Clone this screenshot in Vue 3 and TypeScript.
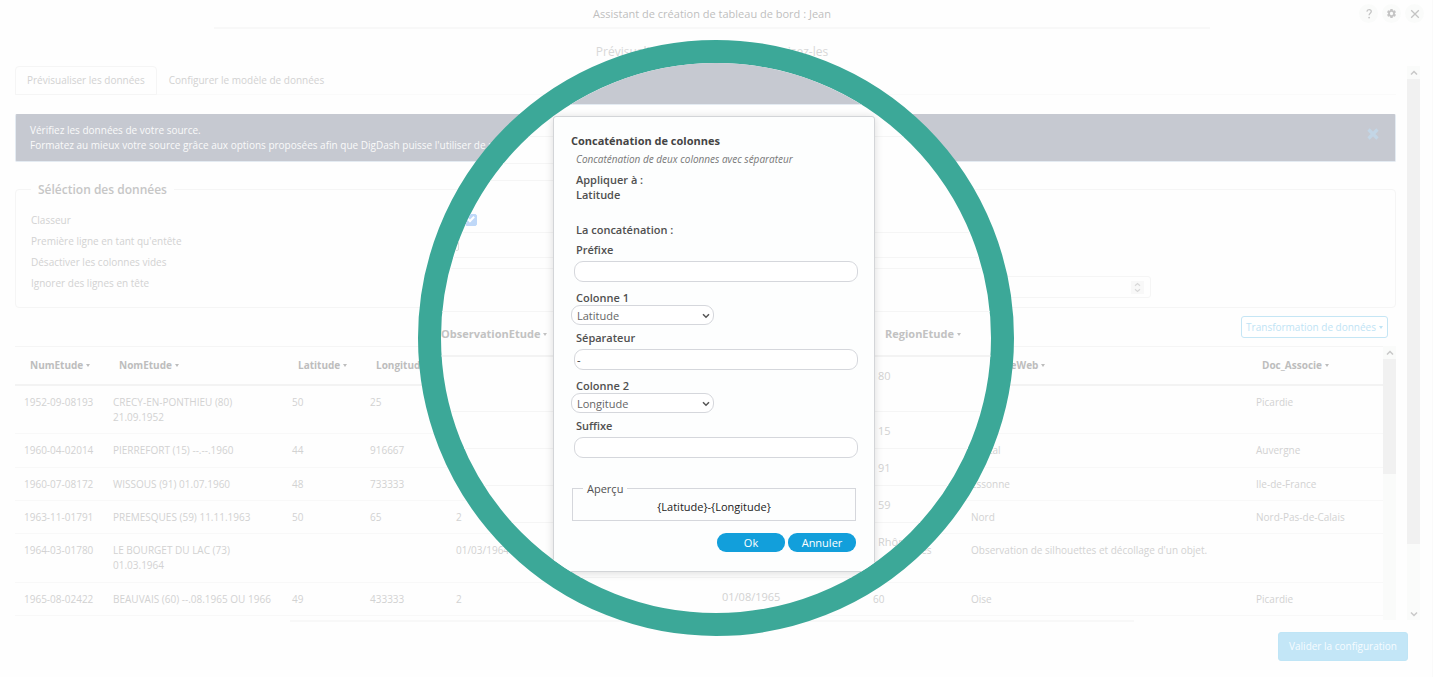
<script setup lang="ts">
import { ref } from 'vue'

interface Study {
  num: string
  name: string
  lat: string
  lon: string
  obs: string
  region: string
  site: string
  doc: string
}

interface LensRow {
  date: string
  region: string
  tall: boolean
}

const columns: string[] = ['NumEtude', 'NomEtude', 'Latitude', 'Longitude', '', '', 'AdresseWeb', 'Doc_Associe']

const studies: Study[] = [
  { num: '1952-09-08193', name: 'CRECY-EN-PONTHIEU (80) 21.09.1952', lat: '50', lon: '25', obs: '', region: '', site: '', doc: 'Picardie' },
  { num: '1960-04-02014', name: 'PIERREFORT (15) --.--.1960', lat: '44', lon: '916667', obs: '', region: '', site: 'Cantal', doc: 'Auvergne' },
  { num: '1960-07-08172', name: 'WISSOUS (91) 01.07.1960', lat: '48', lon: '733333', obs: '', region: '', site: 'Essonne', doc: 'Ile-de-France' },
  { num: '1963-11-01791', name: 'PREMESQUES (59) 11.11.1963', lat: '50', lon: '65', obs: '2', region: '', site: 'Nord', doc: 'Nord-Pas-de-Calais' },
  { num: '1964-03-01780', name: 'LE BOURGET DU LAC (73) 01.03.1964', lat: '', lon: '', obs: '01/03/1964', region: 'Rhône-Alpes', site: "Observation de silhouettes et décollage d'un objet.", doc: '' },
  { num: '1965-08-02422', name: 'BEAUVAIS (60) --.08.1965 OU 1966', lat: '49', lon: '433333', obs: '2', region: '60', site: 'Oise', doc: 'Picardie' },
]

const lensRows: LensRow[] = [
  { date: '', region: '80', tall: true },
  { date: '', region: '15', tall: false },
  { date: '', region: '91', tall: false },
  { date: '', region: '59', tall: false },
  { date: '', region: 'Rhône', tall: true },
  { date: '01/08/1965', region: '', tall: false },
]

const headerRow = ref(true)
const skipEmpty = ref(false)
const prefix = ref('')
const separator = ref('-')
const suffix = ref('')
const column1 = ref('Latitude')
const column2 = ref('Longitude')
</script>

<template>
  <div class="page">
    <header class="top">
      <h1>Assistant de création de tableau de bord : Jean</h1>
      <div class="tools">
        <button type="button">
          <svg viewBox="0 0 12 12" width="12" height="12"><path d="M3.9 3.6C4 2.3 5 1.7 6.1 1.7c1.200 0 2.200.7 2.200 1.900 0 1.700-2.200 1.800-2.200 3.700" fill="none" stroke="currentColor" stroke-width="1.300" /><circle cx="6.100" cy="9.600" r=".9" fill="currentColor" /></svg>
        </button>
        <button type="button">
          <svg viewBox="0 0 24 24" width="11" height="11"><path fill="currentColor" fill-rule="evenodd" d="M19.400 13a7.500 7.500 0 0 0 0-2l2.400-1.800-2.400-4.200-2.800 1.100a8 8 0 0 0-1.800-1L14.400 2H9.600l-.5 3.100a8 8 0 0 0-1.700 1L4.600 5 2.200 9.200 4.600 11a7.500 7.500 0 0 0 0 2l-2.400 1.800L4.600 19l2.800-1.100c.5.400 1.100.7 1.700 1l.5 3.100h4.800l.4-3.100c.7-.3 1.300-.6 1.800-1l2.800 1.100 2.400-4.200zM12 15.600a3.600 3.600 0 1 1 0-7.200 3.600 3.600 0 0 1 0 7.200z" /></svg>
        </button>
        <button type="button">
          <svg viewBox="0 0 12 12" width="12" height="12"><path d="M2.200 2.200l7.600 7.600M9.800 2.200L2.200 9.800" stroke="currentColor" stroke-width="1.300" /></svg>
        </button>
      </div>
    </header>
    <p class="intro">Prévisualisez les données et organisez-les</p>

    <main class="body">
      <div class="content">
        <nav class="tabs">
          <button type="button" class="tab active">Prévisualiser les données</button>
          <button type="button" class="tab">Configurer le modèle de données</button>
        </nav>

        <div class="banner">
          <p>
            Vérifiez les données de votre source.<br />
            Formatez au mieux votre source grâce aux options proposées afin que DigDash puisse l'utiliser de manière optimale.
          </p>
          <button type="button" class="banner-close">
            <svg viewBox="0 0 12 12" width="12" height="12"><path d="M1.500 1.500l9 9M10.500 1.500l-9 9" stroke="currentColor" stroke-width="3.200" /></svg>
          </button>
        </div>

        <fieldset class="selection">
          <legend>Séléction des données</legend>
          <span>Classeur</span>
          <label for="header-row">Première ligne en tant qu'entête</label>
          <label for="skip-empty">Désactiver les colonnes vides</label>
          <div class="skip-row">
            <label for="skip-lines">Ignorer des lignes en tête</label>
            <div class="number">
              <input id="skip-lines" type="text" inputmode="numeric" />
              <span class="spinner">
                <svg viewBox="0 0 13 13" width="13" height="13"><path d="M4 4.800l2.500-2.300L9 4.800M4 8.200l2.500 2.300L9 8.200" fill="none" stroke="currentColor" stroke-width="1.200" /></svg>
              </span>
            </div>
          </div>
        </fieldset>

        <div class="toolbar">
          <button type="button" class="transform">Transformation de données<i class="caret"></i></button>
        </div>

        <div class="grid">
          <table class="data">
            <colgroup>
              <col class="c-num" /><col class="c-name" /><col class="c-lat" /><col class="c-lon" />
              <col /><col class="c-region" /><col class="c-site" /><col class="c-doc" />
            </colgroup>
            <thead>
              <tr>
                <th v-for="(c, i) in columns" :key="i">{{ c }}<i v-if="c" class="caret"></i></th>
              </tr>
            </thead>
            <tbody>
              <tr v-for="s in studies" :key="s.num">
                <td>{{ s.num }}</td>
                <td class="wrap">{{ s.name }}</td>
                <td>{{ s.lat }}</td>
                <td>{{ s.lon }}</td>
                <td>{{ s.obs }}</td>
                <td>{{ s.region }}</td>
                <td>{{ s.site }}</td>
                <td>{{ s.doc }}</td>
              </tr>
            </tbody>
          </table>
          <div class="scroll">
            <span class="arrow"><svg viewBox="0 0 8 6" width="8" height="6"><path d="M1 4.500l3-3 3 3" fill="none" stroke="currentColor" stroke-width="1.500" /></svg></span>
            <span class="thumb short"></span>
          </div>
        </div>
      </div>

      <div class="scroll">
        <span class="arrow"><svg viewBox="0 0 8 6" width="8" height="6"><path d="M1 4.500l3-3 3 3" fill="none" stroke="currentColor" stroke-width="1.500" /></svg></span>
        <span class="thumb long"></span>
        <span class="arrow last"><svg viewBox="0 0 8 6" width="8" height="6"><path d="M1 1.500l3 3 3-3" fill="none" stroke="currentColor" stroke-width="1.500" /></svg></span>
      </div>
    </main>

    <footer class="bottom">
      <button type="button" class="validate">Valider la configuration</button>
    </footer>

    <div class="lens">
      <div class="lens-banner"></div>
      <div class="strip s1"></div>
      <div class="strip s2 half"></div>
      <div class="strip s3 half"></div>
      <div class="strip s4"><input id="header-row" v-model="headerRow" type="checkbox" /></div>
      <div class="strip s5"><input id="skip-empty" v-model="skipEmpty" type="checkbox" /></div>
      <div class="strip s6"></div>
      <table class="lens-table">
        <colgroup><col class="l-obs" /><col class="l-date" /><col /></colgroup>
        <thead>
          <tr>
            <th>ObservationEtude<i class="caret"></i></th>
            <th></th>
            <th>RegionEtude<i class="caret"></i></th>
          </tr>
        </thead>
        <tbody>
          <tr v-for="(r, i) in lensRows" :key="i" :class="{ tall: r.tall }">
            <td></td>
            <td>{{ r.date }}</td>
            <td>{{ r.region }}</td>
          </tr>
        </tbody>
      </table>

      <form class="dialog" @submit.prevent>
        <h2>Concaténation de colonnes</h2>
        <p class="hint">Concaténation de deux colonnes avec séparateur</p>
        <p class="strong">Appliquer à :<br />Latitude</p>
        <p class="strong section">La concaténation :</p>

        <label class="strong" for="prefix">Préfixe</label>
        <input id="prefix" v-model="prefix" type="text" />

        <label class="strong for-select" for="column1">Colonne 1</label>
        <div class="select">
          <select id="column1" v-model="column1">
            <option>Latitude</option>
            <option>Longitude</option>
          </select>
          <svg viewBox="0 0 8 6" width="8" height="6"><path d="M1 1.200l3 3 3-3" fill="none" stroke="currentColor" stroke-width="1.500" /></svg>
        </div>

        <label class="strong" for="separator">Séparateur</label>
        <input id="separator" v-model="separator" type="text" />

        <label class="strong for-select" for="column2">Colonne 2</label>
        <div class="select">
          <select id="column2" v-model="column2">
            <option>Latitude</option>
            <option>Longitude</option>
          </select>
          <svg viewBox="0 0 8 6" width="8" height="6"><path d="M1 1.200l3 3 3-3" fill="none" stroke="currentColor" stroke-width="1.500" /></svg>
        </div>

        <label class="strong" for="suffix">Suffixe</label>
        <input id="suffix" v-model="suffix" type="text" />

        <fieldset class="preview">
          <legend>Aperçu</legend>
          <output>{{ prefix }}{{ '{' + column1 + '}' }}{{ separator }}{{ '{' + column2 + '}' }}{{ suffix }}</output>
        </fieldset>

        <div class="actions">
          <button type="submit">Ok</button>
          <button type="button">Annuler</button>
        </div>
      </form>
    </div>
  </div>
</template>

<style>
body {
  margin: 0;
  background: #fefefe;
}
</style>

<style scoped>
.page {
  position: relative;
  box-sizing: border-box;
  min-height: 100vh;
  overflow: hidden;
  padding-right: 8px;
  border-right: 1px solid #fafafa;
  font-family: "Open Sans", "Noto Sans", sans-serif;
  font-size: 10px;
  line-height: 15px;
  color: #d2d2d2;
  background: #fefefe;
}
.page *,
.page *::before,
.page *::after {
  box-sizing: border-box;
}
h1, h2, p {
  margin: 0;
}
button, input, select {
  margin: 0;
  padding: 0;
  font: inherit;
  color: inherit;
}
svg {
  display: block;
}

.top {
  display: grid;
  grid-template-columns: 1fr auto 1fr;
  grid-template-rows: 1fr 2px;
  align-items: center;
  height: 29px;
}
.top::after {
  content: "";
  grid-column: 1 / -1;
  justify-self: center;
  width: 70%;
  height: 2px;
  background: #f8f8f8;
}
.top h1 {
  grid-column: 2;
  font-size: 11px;
  font-weight: 500;
  color: #bebebe;
}
.tools {
  display: flex;
  justify-content: flex-end;
  gap: 4px;
}
.tools button {
  display: grid;
  place-items: center;
  width: 19px;
  height: 19px;
  border: 0;
  border-radius: 50%;
  background: #fafbfa;
  color: #c4c4c4;
}
.intro {
  padding-top: 15px;
  height: 37px;
  font-size: 12px;
  line-height: 16px;
  text-align: center;
  color: #d8d8d8;
}

.body {
  display: flex;
  gap: 11px;
  padding: 0 4px 0 15px;
}
.content {
  flex: 1;
  min-width: 0;
}
.tabs {
  display: flex;
  height: 29px;
  border-bottom: 1px solid #fafafa;
}
.tab {
  height: 29px;
  padding: 0 11px;
  border: 1px solid transparent;
  background: none;
}
.tab.active {
  border-color: #f5f5f5;
  border-radius: 4px 4px 0 0;
}
.banner {
  display: flex;
  justify-content: space-between;
  align-items: flex-start;
  margin-top: 19px;
  padding: 8px 16px 8px 14px;
  border: 1px solid #e4ebf2;
  border-top-color: #c6c9d1;
  border-radius: 2px;
  background: #c6c9d1;
  color: #fafafa;
}
.banner-close {
  margin-top: 5px;
  border: 0;
  background: none;
  color: #c3d6e6;
}

.selection {
  display: flex;
  flex-direction: column;
  margin: 20px 0 0;
  padding: 16px 15px 9px;
  border: 1px solid #f5f5f5;
  border-radius: 4px;
}
.selection legend {
  padding: 0 7px;
  font-size: 12px;
  font-weight: 600;
  color: #c6c6c6;
}
.selection > span,
.selection > label {
  margin-bottom: 6px;
}
.skip-row {
  display: grid;
  grid-template-columns: 425fr 695fr 229fr;
  align-items: start;
}
.number {
  display: flex;
  align-items: center;
  height: 22px;
  padding-right: 6px;
  border: 1px solid #f5f5f5;
  border-radius: 3px;
}
.number input {
  flex: 1;
  min-width: 0;
  border: 0;
  background: none;
}
.spinner {
  background: #f8f8f8;
  color: #d8d8d8;
}

.toolbar {
  display: flex;
  justify-content: flex-end;
  padding: 8px 8px 8px 0;
}
.transform {
  height: 22px;
  padding: 0 4px;
  border: 1px solid #c5e6f5;
  border-radius: 3px;
  background: #fff;
  color: #bfe4f5;
}
.caret {
  display: inline-block;
  margin-left: 3px;
  border: solid transparent;
  border-width: 3px 2px 0;
  border-top-color: currentColor;
  vertical-align: 2px;
}

.grid {
  display: flex;
  align-items: stretch;
}
.data,
.lens-table {
  flex: 1;
  table-layout: fixed;
  border-collapse: separate;
  border-spacing: 0;
  text-align: left;
}
.data {
  width: 100%;
  margin-bottom: 4px;
  height: 270px;
  border-top: 1px solid #f5f5f5;
}
.data th {
  height: 39px;
  padding: 0 0 0 15px;
  border-bottom: 2px solid #f3f3f3;
  font-weight: 700;
  white-space: nowrap;
  color: #bdbdbd;
}
.data td {
  padding: 9px 0 8px 9px;
  border-bottom: 1px solid #f8f8f8;
  vertical-align: top;
  white-space: nowrap;
}
.data td.wrap {
  padding-right: 10px;
  white-space: normal;
}
.c-num { width: 89px; }
.c-name { width: 179px; }
.c-lat { width: 78px; }
.c-lon { width: 86px; }
.c-region { width: 98px; }
.c-site { width: 285px; }
.c-doc { width: 136px; }

.scroll {
  display: flex;
  flex-direction: column;
  flex: none;
  width: 13px;
  background: #fafbfa;
  color: #c8c8c8;
}
.arrow {
  display: grid;
  place-items: center;
  height: 13px;
}
.arrow.last {
  margin-top: auto;
}
.thumb {
  background: #f1f1f1;
}
.thumb.short {
  height: 42%;
}
.thumb.long {
  height: 84%;
}

.bottom {
  display: flex;
  flex-direction: column;
  align-items: flex-end;
  padding: 0 16px 16px 0;
}
.bottom::before {
  content: "";
  align-self: center;
  width: 60%;
  height: 2px;
  margin: 0 -16px 10px 0;
  background: #f8f8f8;
}
.validate {
  height: 29px;
  padding: 0 10px;
  border: 1px solid #bfe5f6;
  border-radius: 3px;
  background: #c3e6f7;
  color: #f6fcff;
}

/* Round magnifier over the page, clipped to its ring */
.lens {
  position: absolute;
  top: 40px;
  left: calc(50% - 298px);
  width: 596px;
  height: 596px;
  overflow: hidden;
  border: 23px solid #3ca898;
  border-radius: 50%;
  background: #fefefe;
  font-size: 11px;
}
.lens-banner {
  height: 42px;
  border-bottom: 1px solid #e4ebf2;
  background: #c6c9d1;
}
.strip {
  display: flex;
  align-items: flex-end;
  border-bottom: 1px solid #f5f5f5;
}
.s1 { height: 32px; }
.s2 { height: 27px; }
.s3 { height: 17px; }
.s4 { height: 52px; padding: 0 0 6px 24px; }
.s5 { height: 25px; padding: 0 0 6px 6px; }
.s6 { height: 11px; }
.half {
  width: 50%;
}
.strip input {
  appearance: none;
  width: 12px;
  height: 12px;
  border: 1px solid #dedede;
  border-radius: 2px;
}
.strip input:checked {
  border-color: #bfd8f8;
  background: #bfd8f8;
}
.strip input:checked::before {
  content: "";
  display: block;
  width: 4px;
  height: 7px;
  margin-left: 3px;
  border: solid #fff;
  border-width: 0 2px 2px 0;
  transform: rotate(45deg);
}
.lens-table {
  width: 600px;
  margin: 42px 0 0 -14px;
  border-top: 1px solid #f5f5f5;
  line-height: 17px;
}
.lens-table th {
  height: 45px;
  padding: 0 0 0 14px;
  border-bottom: 2px solid #f3f3f3;
  font-weight: 700;
  color: #c2c2c2;
}
.lens-table td {
  height: 37px;
  padding: 10px 0 0 7px;
  border-bottom: 1px solid #f5f5f5;
  vertical-align: top;
}
.lens-table .tall td {
  height: 55px;
}
.l-obs { width: 288px; }
.l-date { width: 156px; }

.dialog {
  position: absolute;
  top: 53px;
  left: 112px;
  width: 322px;
  padding: 16px 16px 19px 17px;
  border: 1px solid #d3d5d8;
  border-radius: 3px;
  background: #fdfefe;
  box-shadow: 0 1px 8px rgba(0, 0, 0, 0.14);
  color: #505050;
}
.dialog h2 {
  font-size: 11px;
  font-weight: 700;
  color: #444;
}
.hint {
  margin: 4px 0 0 5px;
  font-size: 10px;
  font-style: italic;
  color: #777;
}
.strong {
  display: block;
  margin: 5px 0 0 5px;
  font-weight: 600;
}
.section {
  margin-top: 20px;
}
.for-select {
  margin-top: 8px;
}
.dialog input {
  display: block;
  width: calc(100% - 3px);
  height: 21px;
  margin: 4px 0 0 3px;
  padding: 0 2px;
  border: 1px solid #d5d7dc;
  border-radius: 9px;
  background: #fff;
  color: #333;
}
.select {
  position: relative;
  width: 143px;
  color: #555;
}
.select select {
  display: block;
  appearance: none;
  width: 100%;
  height: 20px;
  padding: 0 20px 0 5px;
  border: 1px solid #d5d7dc;
  border-radius: 9px;
  background: #fff;
  color: #666;
}
.select svg {
  position: absolute;
  top: 8px;
  right: 4px;
  pointer-events: none;
}
.preview {
  margin: 23px 2px 0 1px;
  padding: 3px 0 6px;
  border: 1px solid #d5d7dc;
}
.preview legend {
  margin-left: 10px;
  padding: 0 4px;
}
.preview output {
  display: block;
  text-align: center;
  color: #222;
}
.actions {
  display: flex;
  justify-content: flex-end;
  gap: 3px;
  margin: 12px 2px 0 0;
}
.actions button {
  width: 68px;
  height: 19px;
  border: 0;
  border-radius: 9px;
  background: #129fdb;
  color: #fff;
}
</style>
